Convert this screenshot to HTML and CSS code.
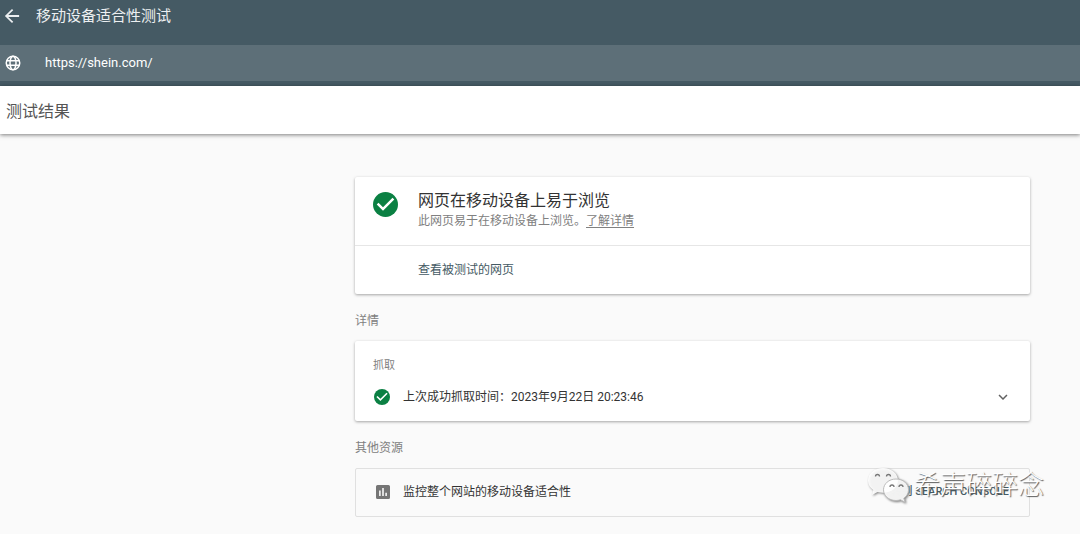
FILE: index.html
```html
<!DOCTYPE html>
<html lang="zh-CN">
<head>
<meta charset="utf-8">
<title>移动设备适合性测试</title>
<link rel="stylesheet" href="styles.css">
</head>
<body>
<header class="top">
  <div class="bar">
    <button class="back" type="button" aria-label="返回">
      <svg viewBox="3 3 18 18" width="16" height="16"><path fill="currentColor" d="M20 11H7.800l5.600-5.600L12 4l-8 8 8 8 1.400-1.400L7.800 13H20z"/></svg>
    </button>
    <h1 class="title">移动设备适合性测试</h1>
  </div>
  <label class="search">
    <svg viewBox="0 0 24 24" width="18" height="18" fill="none" stroke="#fff" stroke-width="2"><circle cx="12" cy="12" r="9"/><ellipse cx="12" cy="12" rx="4" ry="9"/><path d="M3.700 9h16.600M3.700 15h16.600"/></svg>
    <input class="url" type="text" value="https://shein.com/" aria-label="网址">
  </label>
</header>
<div class="result-bar"><h2 class="result-title">测试结果</h2></div>
<main class="content">
  <section class="card">
    <div class="verdict">
      <svg class="verdict-icon" viewBox="2 2 20 20" width="25" height="25"><circle cx="12" cy="12" r="10" fill="#0b8043"/><path fill="#fff" d="M10 17l-5-5 1.400-1.400L10 14.200l7.600-7.600L19 8z"/></svg>
      <div>
        <h3 class="verdict-title">网页在移动设备上易于浏览</h3>
        <p class="verdict-text">此网页易于在移动设备上浏览。<a class="more" href="#">了解详情</a></p>
      </div>
    </div>
    <div class="actions"><button class="view" type="button">查看被测试的网页</button></div>
  </section>
  <h2 class="label">详情</h2>
  <section class="card crawl">
    <h3 class="crawl-title">抓取</h3>
    <button class="row" type="button" aria-expanded="false">
      <svg class="ok" viewBox="2 2 20 20" width="16" height="16"><circle cx="12" cy="12" r="10" fill="#0b8043"/><path fill="#fff" d="M10 17l-5-5 1.400-1.400L10 14.200l7.600-7.600L19 8z"/></svg>
      <span class="row-text">上次成功抓取时间：2023年9月22日 20:23:46</span>
      <svg viewBox="0 0 24 24" width="18" height="18"><path fill="#616161" d="M7.400 8.600L12 13.200l4.600-4.600L18 10l-6 6-6-6z"/></svg>
    </button>
  </section>
  <h2 class="label">其他资源</h2>
  <section class="resource">
    <svg class="chart" viewBox="3 3 18 18" width="14" height="14"><path fill="#757575" d="M19 3H5a2 2 0 0 0-2 2v14a2 2 0 0 0 2 2h14a2 2 0 0 0 2-2V5a2 2 0 0 0-2-2zM9 17H7v-7h2zm4 0h-2V7h2zm4 0h-2v-4h2z"/></svg>
    <span class="row-text">监控整个网站的移动设备适合性</span>
    <a class="console" href="#">转到 SEARCH CONSOLE</a>
    <div class="watermark">
      <svg class="watermark-icon" viewBox="0 0 42 38" width="42" height="38" fill="#fff" fill-opacity=".9">
        <path d="M16 2C7.500 2 1 7.500 1 14.500c0 4 2 7.200 5.300 9.500L5 29l5.500-3c1.800.5 3.600.8 5.500.8 8.500 0 15-5.500 15-12.300S24.500 2 16 2z"/>
        <path stroke="#bbb" d="M29 13c-7 0-12.500 4.700-12.500 10.800S22 34.500 29 34.500c1.600 0 3-.3 4.500-.7l4.500 2.400-1.200-4c2.900-2 4.700-5 4.700-8.400C41.500 17.700 36 13 29 13z"/>
        <g fill="none" stroke="#777" stroke-width="1.300"><path d="M8.500 10.500a2 2 0 0 1 4 0M19.500 10.500a2 2 0 0 1 4 0M23 21a2 2 0 0 1 4 0M32 21a2 2 0 0 1 4 0"/></g>
      </svg>
      <span class="watermark-text">希声碎碎念</span>
    </div>
  </section>
</main>
</body>
</html>
```
FILE: styles.css
```css
* { box-sizing: border-box; }
body {
  margin: 0;
  background: #fafafa;
  color: #333;
  font-family: Roboto, "Noto Sans CJK SC", sans-serif;
  font-size: 12px;
  line-height: 16px;
}
h1, h2, h3, p { margin: 0; font-weight: 400; }
svg { display: block; flex: none; }
button {
  border: 0;
  padding: 0;
  background: none;
  font: inherit;
  color: inherit;
}
.top { background: #455a64; padding-bottom: 5px; }
.bar {
  display: flex;
  align-items: center;
  gap: 16px;
  height: 45px;
  padding: 0 4px 13px;
  color: #eceff1;
}
.title { font-size: 15px; line-height: 24px; }
.search {
  display: flex;
  align-items: center;
  gap: 23px;
  height: 36px;
  padding: 0 4px;
  background: #5d6f78;
}
.url {
  flex: 1;
  border: 0;
  padding: 0;
  outline: 0;
  background: none;
  color: #fff;
  font: inherit;
  font-size: 13px;
}
.result-bar {
  padding: 14px 6px 10px;
  background: #fff;
  box-shadow: 0 1px 4px rgba(0, 0, 0, .5);
}
.result-title { font-size: 16px; line-height: 24px; color: #555; }
.content { padding: 43px 50px 16px 355px; }
.card {
  background: #fff;
  border-radius: 2px;
  box-shadow: 0 1px 3px rgba(0, 0, 0, .35);
}
.verdict {
  display: flex;
  gap: 20px;
  padding: 12px 18px 16px;
  border-bottom: 1px solid #e6e6e6;
}
.verdict-icon { margin-top: 3px; }
.verdict-title { font-size: 16px; line-height: 24px; }
.verdict-text { color: #808080; }
.more { color: inherit; text-underline-offset: 2px; }
.actions { padding: 16px 63px; }
.view { display: block; color: #455a64; }
.label {
  padding: 19px 0 12px;
  font-size: 12px;
  color: #808080;
}
.crawl { padding: 17px 18px 15px; }
.crawl-title { font-size: 11px; color: #808080; }
.row {
  display: flex;
  align-items: center;
  width: 100%;
  margin-top: 14px;
  text-align: left;
}
.ok { margin: 0 13px 0 1px; }
.row-text { flex: 1; }
.resource {
  position: relative;
  display: flex;
  align-items: center;
  padding: 15px 20px 16px;
  border: 1px solid #e0e0e0;
  border-radius: 2px;
}
.chart { margin-right: 13px; }
.console {
  color: #455a64;
  font-size: 11px;
  font-weight: 500;
  text-decoration: none;
}
.watermark {
  position: absolute;
  right: -15px;
  top: -3px;
  display: flex;
  gap: 5px;
}
.watermark-icon { filter: drop-shadow(1px 1px 1px #777); }
.watermark-text {
  font-size: 26px;
  line-height: 38px;
  font-weight: 300;
  color: #fff;
  text-shadow: 1px 1px 1px #555;
}
```
